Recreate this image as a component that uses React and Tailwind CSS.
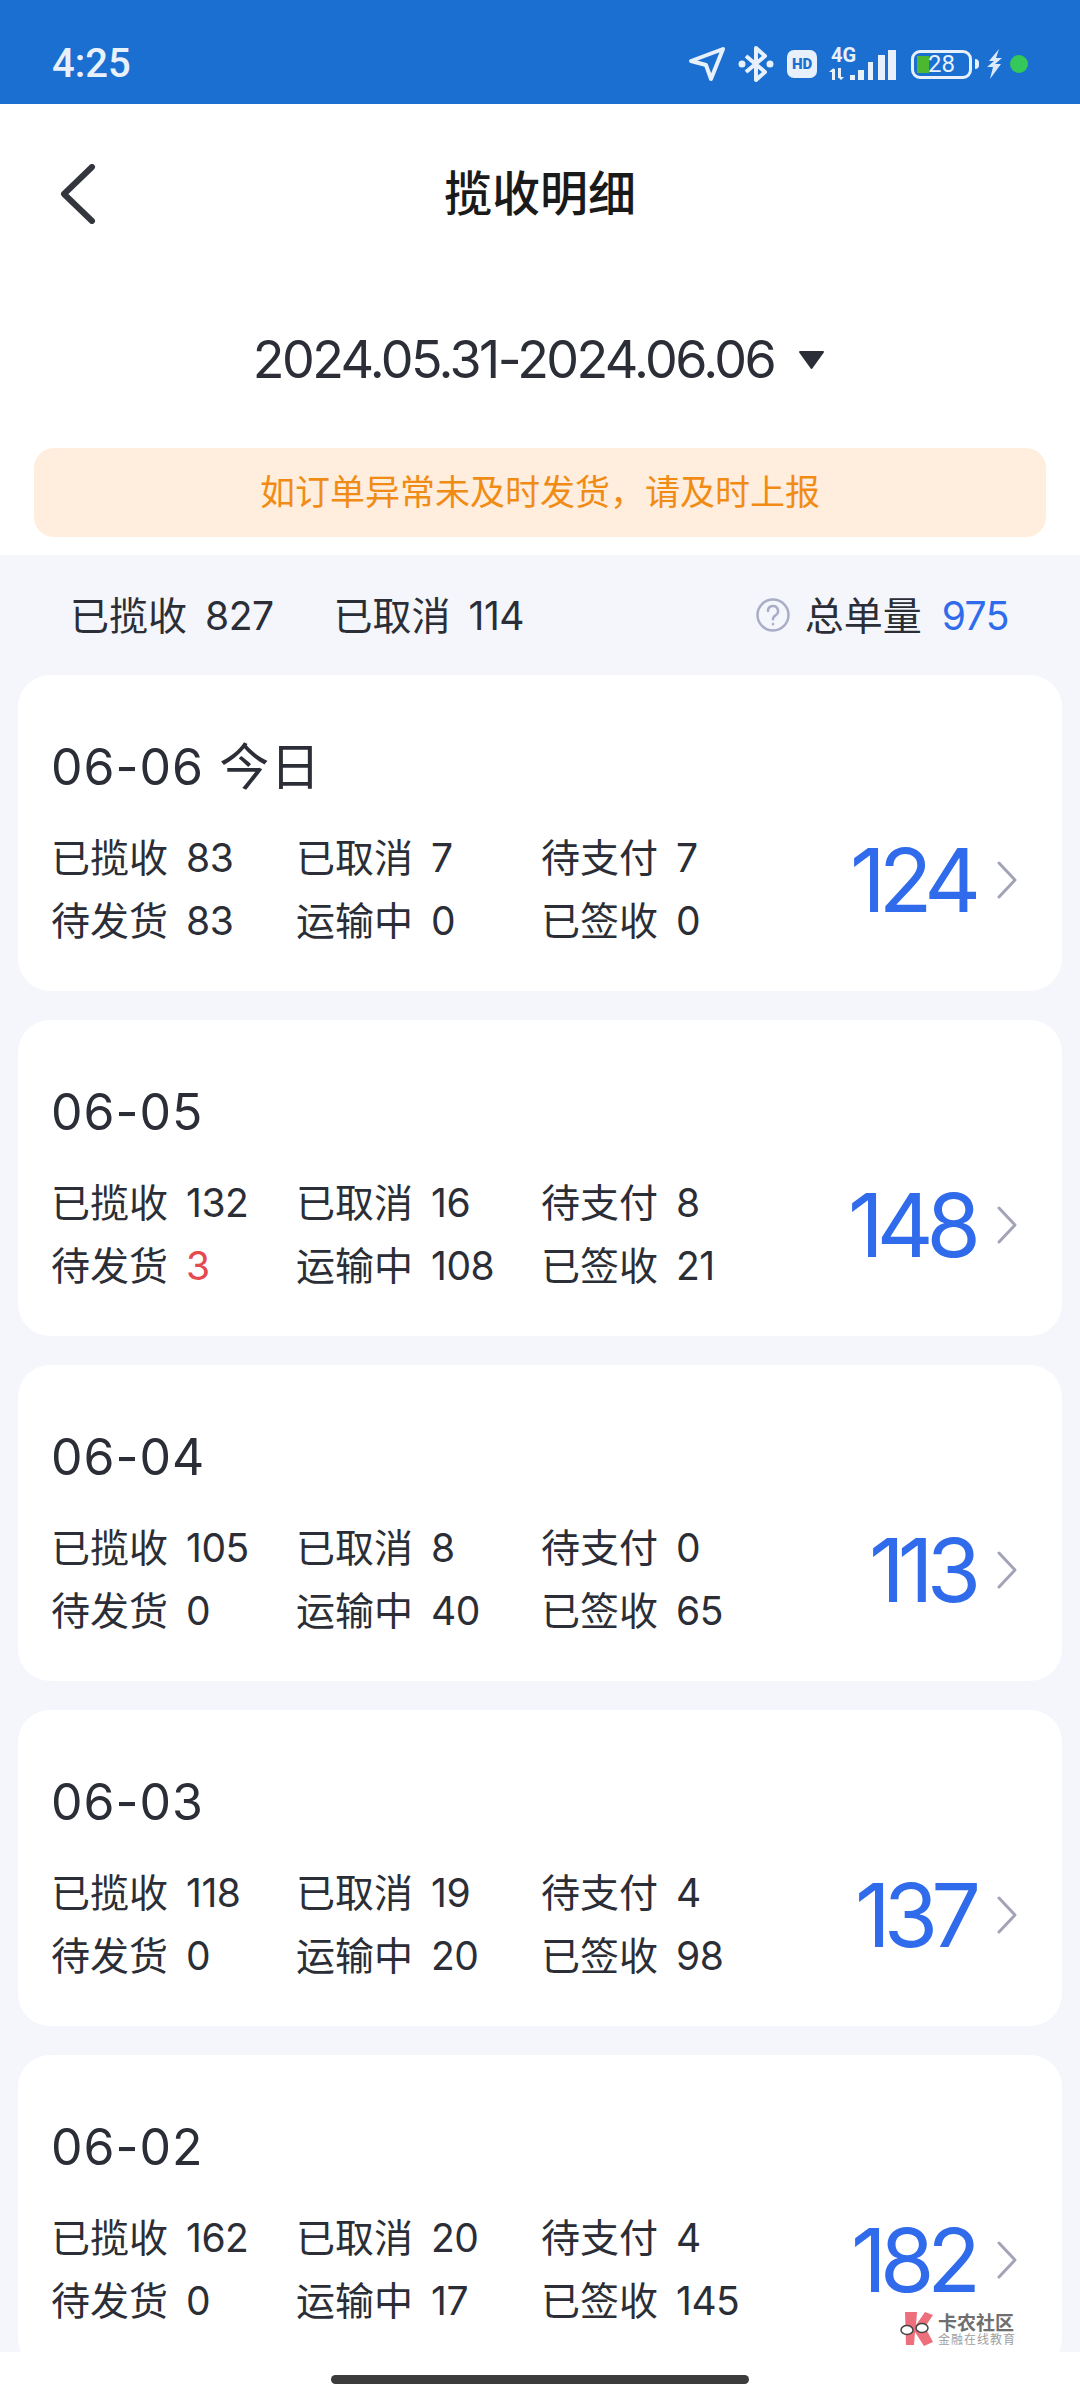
const days = [
  { date: '06-06 今日', a: 83, b: 7, c: 7, d: 83, e: 0, f: 0, total: 124 },
  { date: '06-05', a: 132, b: 16, c: 8, d: 3, e: 108, f: 21, total: 148, alert: true },
  { date: '06-04', a: 105, b: 8, c: 0, d: 0, e: 40, f: 65, total: 113 },
  { date: '06-03', a: 118, b: 19, c: 4, d: 0, e: 20, f: 98, total: 137 },
  { date: '06-02', a: 162, b: 20, c: 4, d: 0, e: 17, f: 145, total: 182 },
];

function Stat({ label, value, alert }) {
  return (
    <div className="flex items-center gap-[18px] whitespace-nowrap">
      <span>{label}</span>
      <span className={alert ? 'tracking-[-0.5px] text-[#e5484d]' : 'tracking-[-0.5px]'}>{value}</span>
    </div>
  );
}

function StatusIcons() {
  return (
    <div className="flex items-center">
      <svg width="38" height="36" viewBox="0 0 38 36" fill="none" stroke="#e8f1fb" strokeWidth="4" strokeLinejoin="round">
        <path d="M3 15 35 3 23 33 18 19Z" />
      </svg>
      <svg className="ml-[12px]" width="36" height="38" viewBox="0 0 36 38" fill="none" stroke="#e8f1fb" strokeWidth="4" strokeLinejoin="round">
        <path d="M8 11 27 27 18 35V3l9 8L8 27" />
        <circle cx="4" cy="19" r="1.500" fill="#e8f1fb" />
        <circle cx="32" cy="19" r="1.500" fill="#e8f1fb" />
      </svg>
      <div className="ml-[13px] flex h-[28px] w-[30px] items-center justify-center rounded-[7px] bg-[#e8f1fb] font-['Roboto'] text-[15px] leading-none font-black text-[#1a6fd0]">
        HD
      </div>
      <div className="relative ml-[12px] h-[32px] w-[67px]">
        <span className="absolute top-[-3px] left-[2px] font-['Roboto'] text-[20px] leading-none font-bold text-[#e8f1fb]">4G</span>
        <svg className="absolute inset-0" width="67" height="32" viewBox="0 0 67 32" fill="#e8f1fb">
          <path d="M3 21h3v11H3zM0 24l4.500-4 0 4zM9 20h3v10H9zM9 29h6l-3 3zM21 27h5v5h-5zM29 22h6v10h-6zM39 14h5v18h-5zM49 7h7v25h-7zM59 2h8v30h-8z" />
        </svg>
      </div>
      <div className="relative ml-[15px] flex h-[29px] w-[61px] items-center justify-center rounded-[9px] border-[3px] border-[#e8f1fb]">
        <div className="absolute top-[3px] left-[3px] h-[17px] w-[12px] bg-[#4cb82f]" />
        <span className="relative font-['Roboto'] text-[24px] leading-none text-[#e8f1fb]">28</span>
      </div>
      <div className="ml-[3px] h-[10px] w-[4px] rounded-r-sm bg-[#e8f1fb]" />
      <svg className="ml-[8px]" width="15" height="30" viewBox="0 0 15 30" fill="#dbe9f8">
        <path d="M12 0 2 12h5l-7 6h6l-3 12L14 15H8l7-6H9z" />
      </svg>
      <div className="ml-[8px] h-[18px] w-[18px] rounded-full bg-[#34c759]" />
    </div>
  );
}

function Watermark() {
  return (
    <div className="absolute top-[2311px] left-[900px] flex items-center">
      <svg width="34" height="36" viewBox="0 0 34 36">
        <path d="M5 1h12l-1 13 9-13 8 3-8 12 8 15-9 4-9-14-1 13H6z" fill="#ee6f7c" />
        <ellipse cx="7" cy="19" rx="6" ry="4.500" fill="#fff" stroke="#444" strokeWidth="1.500" />
        <ellipse cx="22" cy="17" rx="6" ry="4.500" fill="#fff" stroke="#444" strokeWidth="1.500" />
      </svg>
      <div className="ml-[4px] flex flex-col font-['Noto_Sans_CJK_SC',sans-serif]">
        <span className="text-[19px] leading-[20px] font-bold text-[#6f6f6f]">卡农社区</span>
        <span className="text-[12px] leading-[14px] tracking-[1px] text-[#a0a0a0]">金融在线教育</span>
      </div>
    </div>
  );
}

export default function App() {
  return (
    <div className="relative flex h-[2400px] w-[1080px] flex-col overflow-hidden bg-white font-['Inter','Noto_Sans_CJK_SC',sans-serif] text-[#2b2e36]">
      <div className="flex h-[104px] shrink-0 items-center justify-between bg-[#1a6fd0] pt-[24px] pr-[52px] pl-[52px]">
        <span className="font-['Roboto'] text-[40px] leading-none font-medium text-[#e8f1fb]">4:25</span>
        <StatusIcons />
      </div>

      <div className="relative flex h-[180px] shrink-0 items-center justify-center">
        <svg className="absolute top-[60px] left-[60px]" width="36" height="60" viewBox="0 0 36 60" fill="none" stroke="#33363d" strokeWidth="6" strokeLinecap="round" strokeLinejoin="round">
          <path d="M32 3 4 30l28 27" />
        </svg>
        <h1 className="text-[48px] leading-none font-medium text-[#1a1a1a]">揽收明细</h1>
      </div>

      <div className="flex h-[152px] shrink-0 items-center justify-center gap-[24px] pr-[2px]">
        <span className="text-[52px] leading-none tracking-[-2.6px]">2024.05.31-2024.06.06</span>
        <svg width="27" height="20" viewBox="0 0 27 20" fill="#2b2e36">
          <path d="M2 2h23L13.500 18Z" stroke="#2b2e36" strokeWidth="2" strokeLinejoin="round" />
        </svg>
      </div>

      <div className="mx-[34px] mt-[12px] flex h-[89px] shrink-0 items-center justify-center rounded-[20px] bg-[#ffeedd] text-[35px] leading-none text-[#f08c15]">
        如订单异常未及时发货，请及时上报
      </div>

      <div className="mt-[18px] flex min-h-0 flex-1 flex-col overflow-hidden bg-[#f4f6fb]">
        <div className="flex h-[120px] shrink-0 items-center justify-between pr-[71px] pl-[70px] text-[39px] leading-none">
          <div className="flex items-center gap-[60px]">
            <Stat label="已揽收" value={827} />
            <Stat label="已取消" value={114} />
          </div>
          <div className="flex items-center">
            <svg width="36" height="36" viewBox="0 0 36 36" fill="none" stroke="#a9adc6" strokeWidth="2.500" strokeLinecap="round">
              <circle cx="18" cy="18" r="15.500" />
              <path d="M13 14a5 5 0 1 1 7.500 4.300c-1.700 1-2.500 2-2.500 4" />
              <path d="M18 27v.2" />
            </svg>
            <span className="ml-[14px]">总单量</span>
            <span className="ml-[20px] tracking-[-0.5px] text-[#2f6bea]">975</span>
          </div>
        </div>

        <div className="flex flex-col gap-[29px] px-[18px]">
          {days.map((day) => (
            <div key={day.date} className="relative flex h-[316px] shrink-0 flex-col rounded-[32px] bg-white pt-[67px] pl-[33px]">
              <div className="text-[50px] leading-none tracking-[1px]">{day.date}</div>
              <div className="mt-[46px] grid w-[735px] grid-cols-3 gap-y-[23px] text-[39px] leading-[40px]">
                <Stat label="已揽收" value={day.a} />
                <Stat label="已取消" value={day.b} />
                <Stat label="待支付" value={day.c} />
                <Stat label="待发货" value={day.d} alert={day.alert} />
                <Stat label="运输中" value={day.e} />
                <Stat label="已签收" value={day.f} />
              </div>
              <div className="absolute top-[165px] right-[45px] flex items-center">
                <span className="text-[88px] leading-[80px] tracking-[-7px] text-[#2f6bea]">{day.total}</span>
                <svg className="ml-[23px]" width="20" height="38" viewBox="0 0 20 38" fill="none" stroke="#a3a3b8" strokeWidth="3" strokeLinecap="round" strokeLinejoin="round">
                  <path d="M2 2l16 17L2 36" />
                </svg>
              </div>
            </div>
          ))}
        </div>
      </div>

      <div className="flex h-[48px] shrink-0 items-start justify-center pt-[23px]">
        <div className="h-[9px] w-[418px] rounded-full bg-[#3c3c3c]" />
      </div>

      <Watermark />
    </div>
  );
}
